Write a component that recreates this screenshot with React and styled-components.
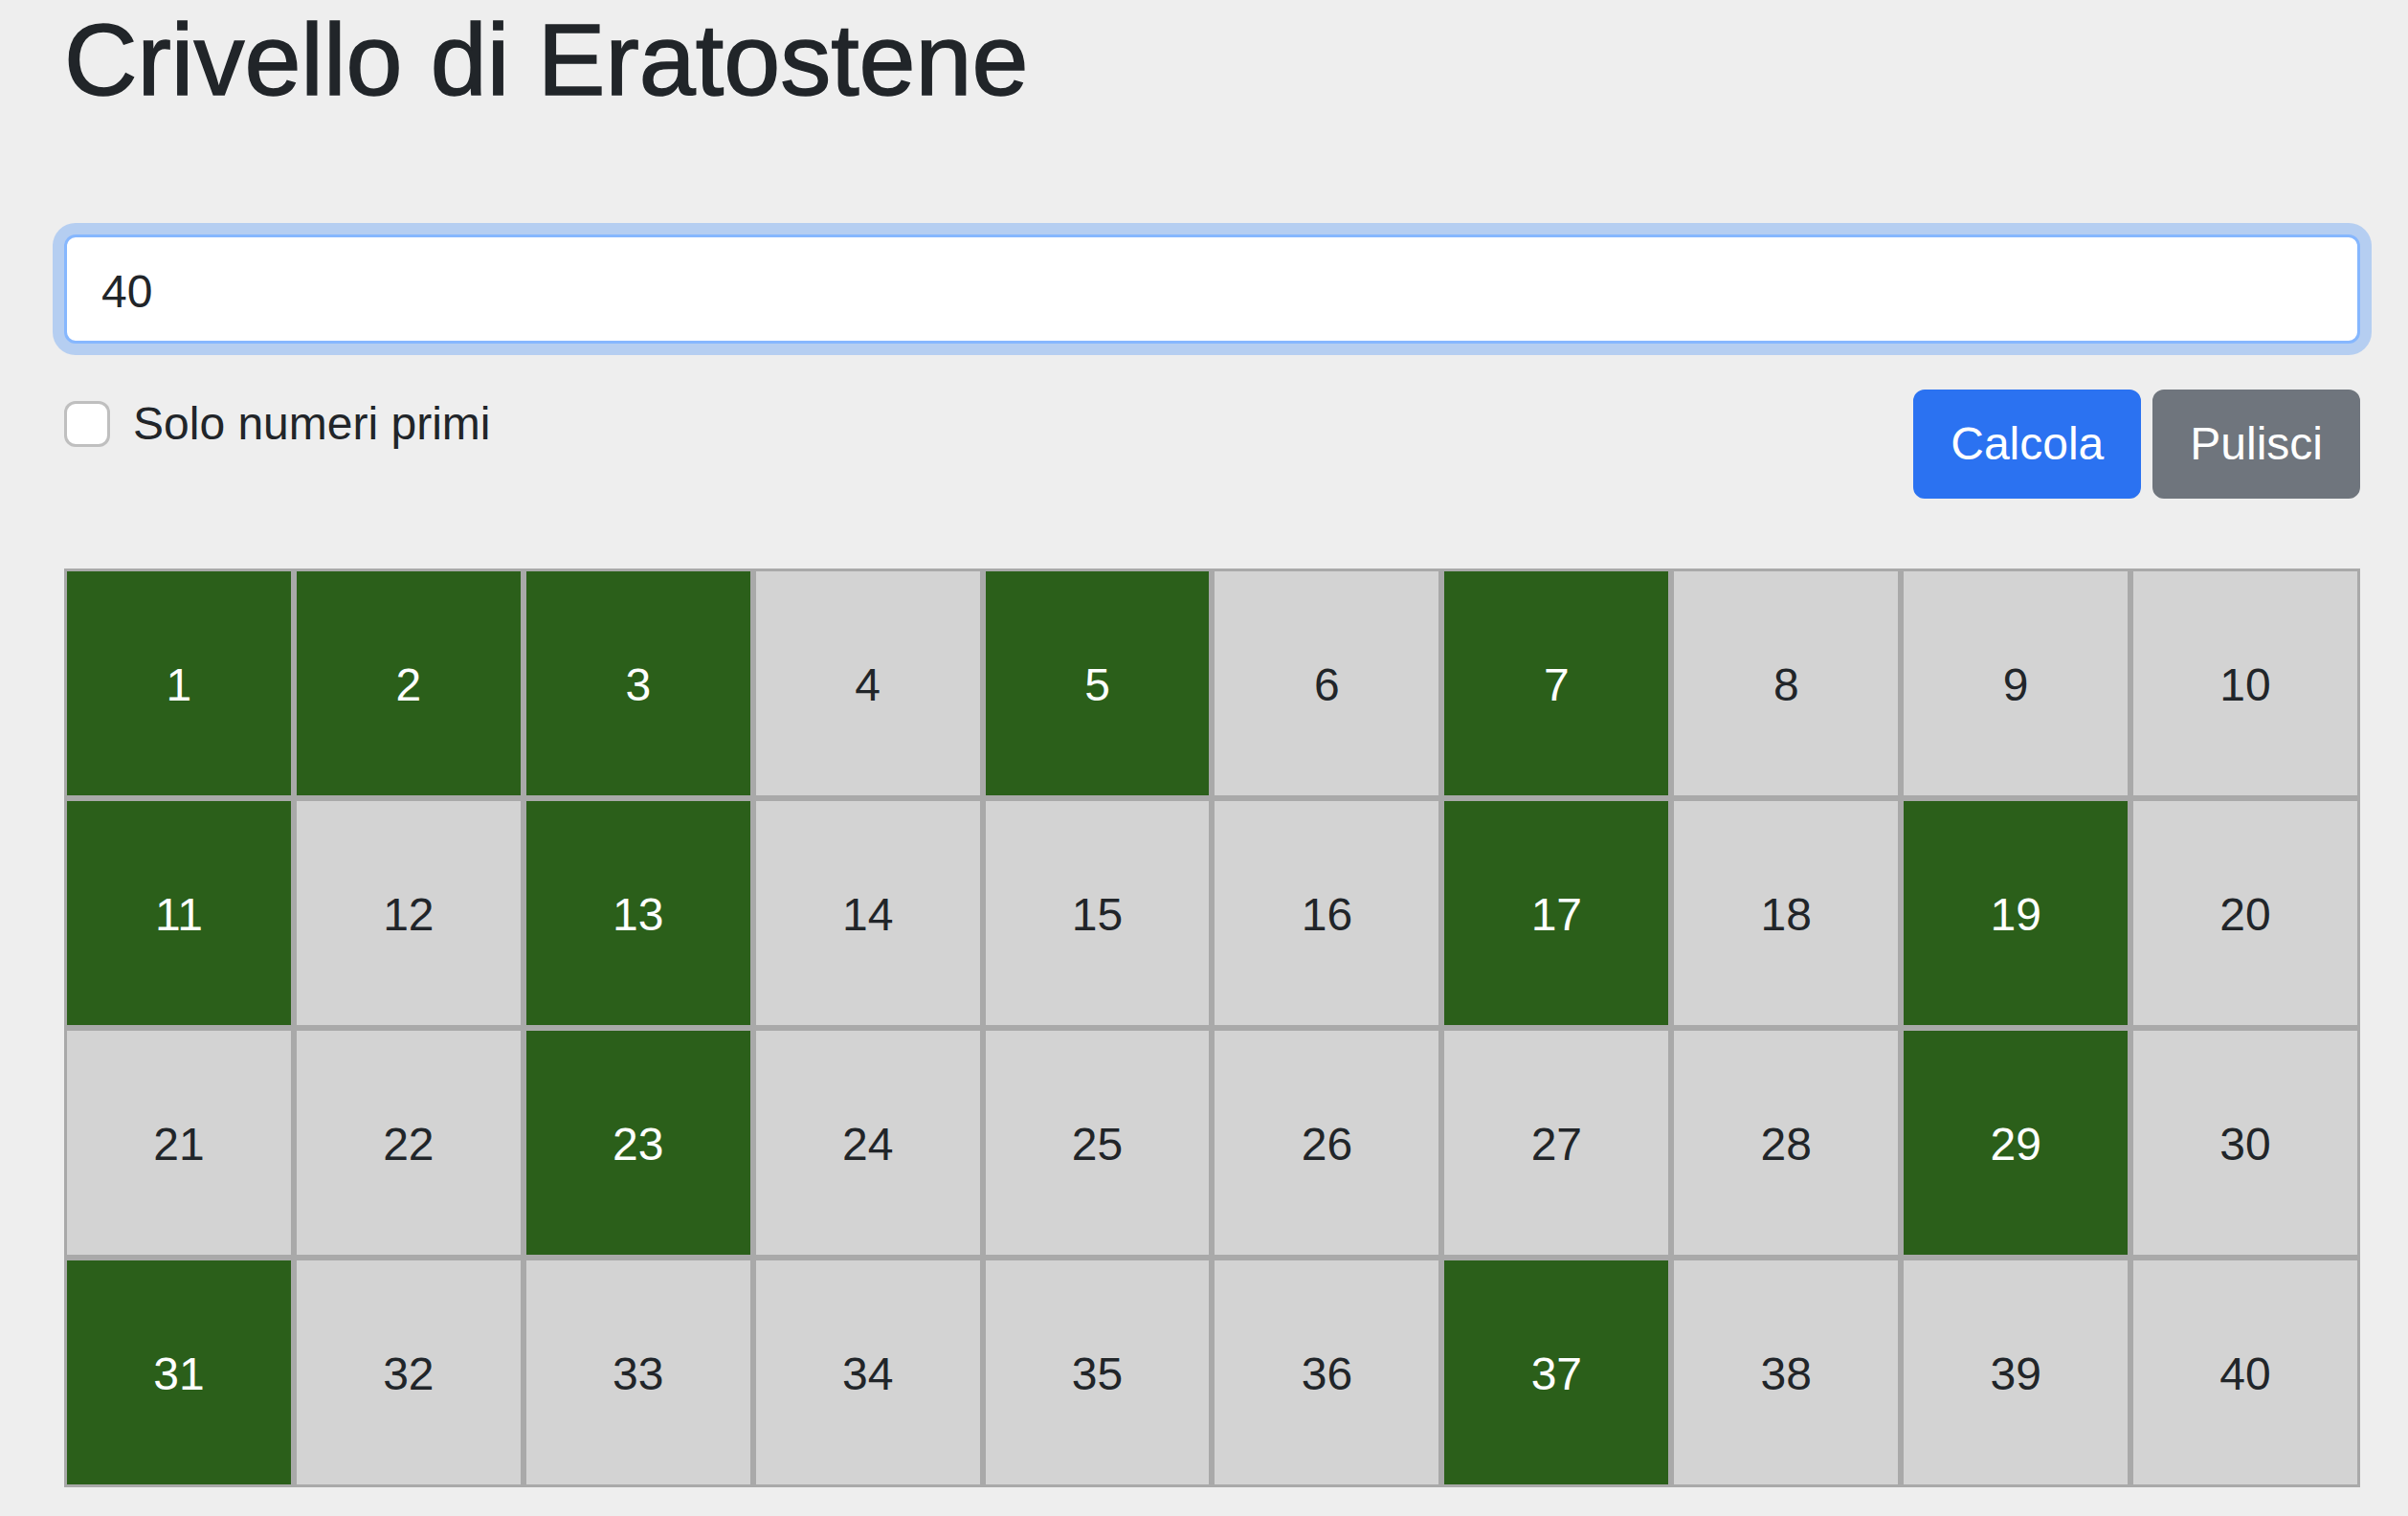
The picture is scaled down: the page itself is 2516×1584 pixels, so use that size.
import React, { useState } from "react";
import styled, { createGlobalStyle } from "styled-components";

const GlobalStyle = createGlobalStyle`
  html, body {
    margin: 0;
    padding: 0;
    background: #eeeeee;
  }
  body {
    font-family: "Liberation Sans", Arial, Helvetica, sans-serif;
    color: #212529;
  }
  * {
    box-sizing: border-box;
  }
`;

const isPrime = n => {
  if (n === 1) return true;
  for (let d = 2; d * d <= n; d++) if (n % d === 0) return false;
  return true;
};

export default function App() {
  const [value, setValue] = useState("40");
  const [onlyPrimes, setOnlyPrimes] = useState(false);
  const numbers = Array.from({ length: 40 }, (_, i) => i + 1);

  return (
    <Page>
      <GlobalStyle />
      <Title>Crivello di Eratostene</Title>
      <NumberInput
        type="text"
        value={value}
        autoFocus
        onChange={e => setValue(e.target.value)}
      />
      <Controls>
        <CheckRow>
          <Check
            type="checkbox"
            checked={onlyPrimes}
            onChange={e => setOnlyPrimes(e.target.checked)}
          />
          <CheckLabel>Solo numeri primi</CheckLabel>
        </CheckRow>
        <Buttons>
          <Button $variant="primary">Calcola</Button>
          <Button $variant="secondary">Pulisci</Button>
        </Buttons>
      </Controls>
      <Sieve>
        {numbers.map(n => (
          <Cell key={n} $prime={isPrime(n)}>
            {n}
          </Cell>
        ))}
      </Sieve>
    </Page>
  );
}

const Page = styled.div`
  padding: 0 50px 40px 67px;
`;

const Title = styled.h1`
  margin: 0 0 120px;
  font-size: 106px;
  font-weight: 500;
  line-height: 125px;
  color: #212529;
  -webkit-text-stroke: 1.5px #212529;
`;

const NumberInput = styled.input`
  display: block;
  width: 100%;
  height: 114px;
  padding: 20px 36px 16px;
  font-family: "Liberation Sans", Arial, sans-serif;
  font-size: 48px;
  line-height: 72px;
  color: #212529;
  caret-color: #212529;
  background: #ffffff;
  border: 3px solid #86b7fe;
  border-radius: 12px;
  box-shadow: 0 0 0 12px rgba(13, 110, 253, 0.25);
  outline: none;
`;

const Controls = styled.div`
  display: flex;
  justify-content: space-between;
  align-items: flex-start;
  margin-top: 48px;
  margin-bottom: 73px;
`;

const CheckRow = styled.label`
  display: flex;
  align-items: flex-start;
  min-height: 72px;
`;

const Check = styled.input`
  appearance: none;
  width: 48px;
  height: 48px;
  margin: 12px 24px 0 0;
  background: #ffffff;
  border: 3px solid rgba(0, 0, 0, 0.25);
  border-radius: 12px;
  flex-shrink: 0;
`;

const CheckLabel = styled.span`
  font-size: 48px;
  line-height: 72px;
  color: #212529;
`;

const Buttons = styled.div`
  display: flex;
  gap: 12px;
`;

const Button = styled.button`
  height: 114px;
  padding: 18px 36px;
  font-family: "Liberation Sans", Arial, sans-serif;
  font-size: 48px;
  line-height: 72px;
  color: #ffffff;
  background: ${p => (p.$variant === "primary" ? "#2b72f1" : "#6f757d")};
  border: 3px solid
    ${p => (p.$variant === "primary" ? "#2b72f1" : "#6f757d")};
  border-radius: 12px;
  cursor: pointer;
`;

const Sieve = styled.div`
  display: grid;
  grid-template-columns: repeat(10, 1fr);
`;

const Cell = styled.div`
  display: flex;
  align-items: center;
  justify-content: center;
  height: 240px;
  padding-top: 3px;
  font-size: 48px;
  border: 3px solid #a9a9a9;
  background: ${p => (p.$prime ? "#2b5f1a" : "#d3d3d3")};
  color: ${p => (p.$prime ? "#ffffff" : "#212529")};
`;
